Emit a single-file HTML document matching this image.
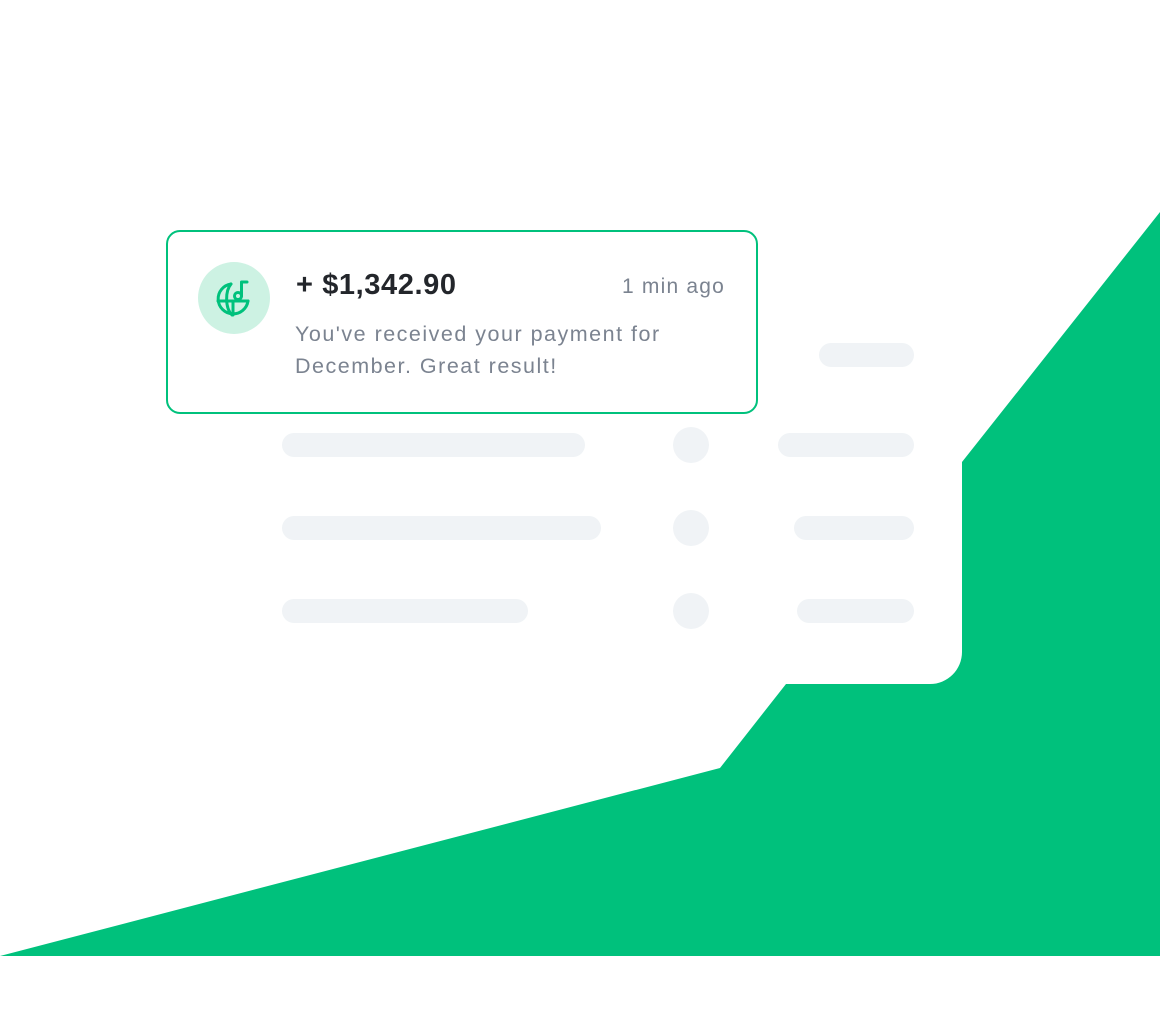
<!DOCTYPE html>
<html><head><style>
body{margin:0;width:1160px;height:1024px;background:#fff;position:relative;overflow:hidden;font-family:"Liberation Sans",sans-serif}
.b{position:absolute;background:#f0f3f6;height:24px;border-radius:12px}
.c{position:absolute;background:#f0f3f6;width:36px;height:36px;border-radius:50%}
.card{position:absolute;left:166px;top:230px;width:588px;height:180px;border:2px solid #00c17c;border-radius:14px;background:#fff}
.t{position:absolute;white-space:nowrap}
</style></head><body>
<svg style="position:absolute;left:0;top:0" width="1160" height="1024"><path d="M0 956 L720 768 L786 684 L930 684 A32 32 0 0 0 962 652 L962 462 L1160 212 L1160 956 Z" fill="#00c17c"/></svg>
<div class="b" style="left:819px;top:343px;width:95px"></div>
<div class="b" style="left:282px;top:433px;width:303px"></div><div class="c" style="left:673px;top:427px"></div><div class="b" style="left:778px;top:433px;width:136px"></div>
<div class="b" style="left:282px;top:516px;width:319px"></div><div class="c" style="left:673px;top:510px"></div><div class="b" style="left:794px;top:516px;width:120px"></div>
<div class="b" style="left:282px;top:599px;width:246px"></div><div class="c" style="left:673px;top:593px"></div><div class="b" style="left:797px;top:599px;width:117px"></div>
<div class="card">
<svg style="position:absolute;left:30px;top:30px" width="72" height="72" viewBox="0 0 72 72"><circle cx="36" cy="36" r="36" fill="#cdf2e3"/>
<g fill="none" stroke="#00c17c" stroke-width="3" stroke-linecap="round" stroke-linejoin="round"><path d="M33 22 A15 15 0 1 0 50 39"/><path d="M20 39 H50"/><path d="M33 22 C27 29 27 46 34 53"/><path d="M35 39 V53"/><circle cx="40" cy="34" r="3.5"/><path d="M43.5 34 V20 H49"/></g></svg>
<div class="t" style="left:128px;top:37px;font-size:29px;font-weight:bold;color:#23262b;letter-spacing:0.6px">+ $1,342.90</div>
<div class="t" style="right:31px;top:43px;font-size:21px;color:#7b8390;letter-spacing:1.2px">1 min ago</div>
<div class="t" style="left:127px;top:86px;font-size:21.5px;line-height:32px;color:#7b8390;letter-spacing:1.5px">You've received your payment for<br>December. Great result!</div>
</div>
</body></html>
